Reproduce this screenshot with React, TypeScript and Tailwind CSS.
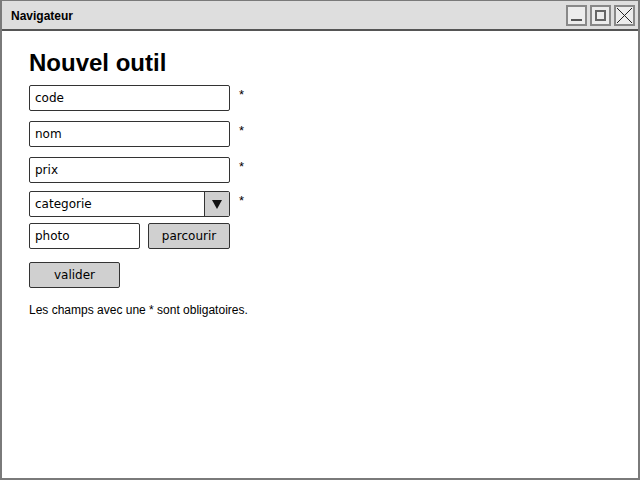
import React from "react";

const hand = { fontFamily: '"DejaVu Sans", "Liberation Sans", sans-serif' };

function Field({ label, width, star }: { label: string; width: string; star?: boolean }) {
  return (
    <div className="flex items-start">
      <div
        className={`${width} h-[26px] border border-[#333] bg-white rounded-[2px] flex items-center pl-[5px] text-[12px] text-black`}
        style={hand}
      >
        {label}
      </div>
      {star && <span className="ml-[9px] mt-[3px] text-[13px] leading-[13px] text-black" style={{ fontFamily: '"Liberation Sans", sans-serif' }}>*</span>}
    </div>
  );
}

export default function App() {
  return (
    <div className="w-[640px] h-[480px] bg-white border-2 border-t border-[#7a7a7a] flex flex-col overflow-hidden">
      <div className="h-[30px] bg-[#dedede] border-b-2 border-[#555] flex items-center pl-[9px] pr-[3px] shrink-0">
        <span className="text-[12px] font-bold text-black flex-1 pt-[1px]" style={{ fontFamily: '"Liberation Sans", Arial, sans-serif' }}>Navigateur</span>
        <div className="flex gap-[3px]">
          <div className="w-[21px] h-[21px] border-2 border-[#888] bg-[#ececec] flex items-end justify-center pb-[3px]">
            <div className="w-[11px] h-[2px] bg-[#555]" />
          </div>
          <div className="w-[21px] h-[21px] border-2 border-[#888] bg-[#ececec] flex items-center justify-center">
            <div className="w-[11px] h-[11px] border-2 border-[#666]" />
          </div>
          <div className="w-[21px] h-[21px] border-2 border-[#888] bg-[#ececec] flex items-center justify-center">
            <svg width="17" height="17" viewBox="0 0 17 17">
              <line x1="1" y1="1" x2="16" y2="16" stroke="#222" strokeWidth="1" />
              <line x1="16" y1="1" x2="1" y2="16" stroke="#222" strokeWidth="1" />
            </svg>
          </div>
        </div>
      </div>
      <div className="flex flex-col pl-[27px] pt-[18px]">
        <h1 className="text-[24px] leading-[28px] font-bold text-black" style={{ fontFamily: '"Liberation Sans", Arial, sans-serif' }}>
          Nouvel outil
        </h1>
        <div className="mt-[8px] flex flex-col">
          <Field label="code" width="w-[201px]" star />
          <div className="mt-[10px]"><Field label="nom" width="w-[201px]" star /></div>
          <div className="mt-[10px]"><Field label="prix" width="w-[201px]" star /></div>
          <div className="mt-[8px] flex items-start">
            <div className="w-[201px] h-[26px] border border-[#333] bg-white rounded-[2px] flex" style={hand}>
              <div className="flex-1 flex items-center pl-[5px] text-[12px] text-black">categorie</div>
              <div className="w-[25px] h-full border-l border-[#333] bg-[#cfcfcf] flex items-center justify-center">
                <svg width="10" height="9" viewBox="0 0 10 9"><polygon points="0,0 10,0 5,9" fill="#111" /></svg>
              </div>
            </div>
            <span className="ml-[9px] mt-[3px] text-[13px] leading-[13px] text-black" style={{ fontFamily: '"Liberation Sans", sans-serif' }}>*</span>
          </div>
          <div className="mt-[6px] flex">
            <Field label="photo" width="w-[111px]" />
            <div className="ml-[8px] w-[82px] h-[26px] border border-[#333] bg-[#d0d0d0] rounded-[2px] flex items-center justify-center text-[12px] text-black" style={hand}>
              parcourir
            </div>
          </div>
          <div className="mt-[13px] w-[91px] h-[26px] border border-[#333] bg-[#d0d0d0] rounded-[2px] flex items-center justify-center text-[12px] text-black" style={hand}>
            valider
          </div>
          <p className="mt-[15px] text-[12px] leading-[15px] text-black" style={{ fontFamily: '"Liberation Sans", Arial, sans-serif' }}>
            Les champs avec une * sont obligatoires.
          </p>
        </div>
      </div>
    </div>
  );
}
